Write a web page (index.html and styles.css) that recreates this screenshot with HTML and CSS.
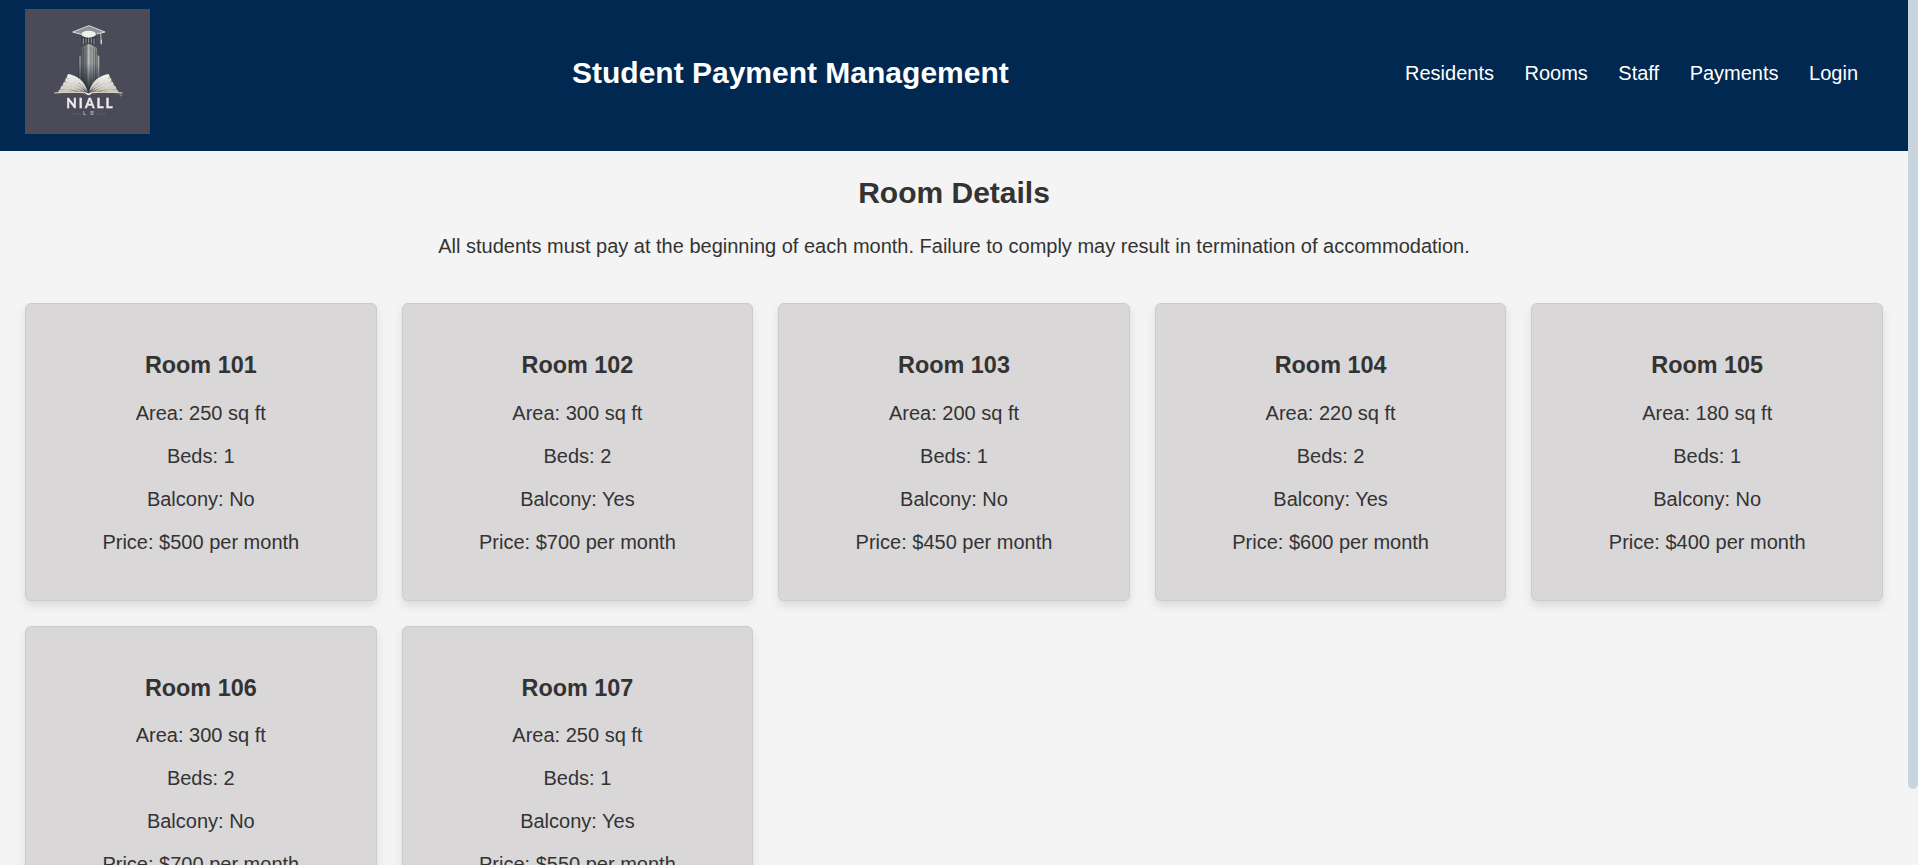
FILE: index.html
```html
<!DOCTYPE html>
<html lang="en">
<head>
<meta charset="utf-8">
<title>Student Payment Management</title>
<link rel="stylesheet" href="styles.css">
</head>
<body>
<div class="page">
  <header class="header">
    <svg class="logo" viewBox="75 27 375 375" role="img" aria-label="Niall logo">
      <defs>
        <linearGradient id="tower" x1="0" x2="1" y1="0" y2="0">
          <stop offset="0" stop-color="#3a4148"/><stop offset=".4" stop-color="#858a8d"/><stop offset=".6" stop-color="#b9bbb9"/><stop offset="1" stop-color="#63686b"/>
        </linearGradient>
        <linearGradient id="shade" x1="0" x2="0" y1="0" y2="1">
          <stop offset=".4" stop-color="#1c242b" stop-opacity="0"/><stop offset="1" stop-color="#1c242b"/>
        </linearGradient>
        <linearGradient id="page" x1="0" x2="0" y1="0" y2="1">
          <stop offset="0" stop-color="#f4f3ee"/><stop offset="1" stop-color="#c4c2ba"/>
        </linearGradient>
        <filter id="soft"><feGaussianBlur stdDeviation=".9"/></filter>
      </defs>
      <rect class="logo-bg" x="75" y="27" width="375" height="375"/>
      <g filter="url(#soft)">
        <path d="M235 168l7-4V144l24-13 25 13v20l8 4v80l-32 29-32-29z" fill="url(#tower)"/>
        <path d="M244 147v106M251 143v117M258 139v129M273 138v130M280 142v119M287 146v107" stroke="#454c52" stroke-width="2"/>
        <path d="M240 167v80M265 134v135M296 169v74" stroke="#c9cac6" stroke-width="2.5"/>
        <path d="M235 168l7-4V144l24-13 25 13v20l8 4v80l-32 29-32-29z" fill="url(#shade)"/>
        <path d="M245 111h42v23l-21-5-21 8z" fill="#353d45"/>
        <path d="M250 115v18M258 115v15M266 115v14M274 115v15M282 115v18" stroke="#aeb1b0" stroke-width="2.5"/>
        <path d="M218 96l49-19 48 19-25 7-46 1z" fill="#8f9294"/>
        <path d="M218 96l49-19 48 19M218 96l26 7M315 96l-25 6" fill="none" stroke="#dcdcd8" stroke-width="3"/>
        <path d="M244 103q2-11 22-11t22 11q-2 9-22 10-20-1-22-10z" fill="#f0f0ec"/>
        <path d="M302 97l2 34" stroke="#c3c2bd" stroke-width="3"/>
        <path d="M304 119v14" stroke="#d1cfc8" stroke-width="4"/>
        <path d="M204 222q42 8 60 52l-3 4H174l17-32 3-9z" fill="#5d5f63"/>
        <path d="M326 222q-42 8-60 52l3 4h88l-17-32-3-9z" fill="#5d5f63"/>
        <path d="M204 222q44 7 58 50-22-28-62-39zM198 234q39 6 62 40-28-23-65-29zM192 246q37 1 64 30-29-18-69-19zM184 258q35-4 67 19-31-10-71-9zM178 269q30-5 57 9h-62z" fill="url(#page)"/>
        <path d="M326 222q-44 7-58 50 22-28 62-39zM332 234q-39 6-62 40 28-23 65-29zM338 246q-37 1-64 30 29-18 69-19zM346 258q-35-4-67 19 31-10 71-9zM352 269q-30-5-57 9h62z" fill="url(#page)"/>
        <path d="M163 279q53-5 91-1l11 5 11-5q42-4 92 1" fill="none" stroke="#d9d1bd" stroke-width="3.5"/>
        <path d="M208 274q18-5 35 2M288 275q16-6 33-1" fill="none" stroke="#bca987" stroke-width="3"/>
        <path d="M258 279q8 9 15 0" fill="none" stroke="#e7e6e0" stroke-width="4"/>
        <path d="M359 284l5 2-2 3" fill="none" stroke="#b7ad9d" stroke-width="2.5"/>
        <text class="logo-name" x="199" y="325" textLength="139">NIALL</text>
        <path d="M217 342h24M291 342h27" stroke="#65656f" stroke-width="2"/>
        <text class="logo-sub" x="249" y="346" textLength="33">L B</text>
      </g>
    </svg>
    <h1 class="title">Student Payment Management</h1>
    <nav class="nav">
      <a>Residents</a><a>Rooms</a><a>Staff</a><a>Payments</a><a>Login</a>
    </nav>
  </header>
  <main class="main">
    <h2 class="heading">Room Details</h2>
    <p class="notice">All students must pay at the beginning of each month. Failure to comply may result in termination of accommodation.</p>
    <section class="rooms">
      <article class="room"><h3>Room 101</h3><p>Area: 250 sq ft</p><p>Beds: 1</p><p>Balcony: No</p><p>Price: $500 per month</p></article>
      <article class="room"><h3>Room 102</h3><p>Area: 300 sq ft</p><p>Beds: 2</p><p>Balcony: Yes</p><p>Price: $700 per month</p></article>
      <article class="room"><h3>Room 103</h3><p>Area: 200 sq ft</p><p>Beds: 1</p><p>Balcony: No</p><p>Price: $450 per month</p></article>
      <article class="room"><h3>Room 104</h3><p>Area: 220 sq ft</p><p>Beds: 2</p><p>Balcony: Yes</p><p>Price: $600 per month</p></article>
      <article class="room"><h3>Room 105</h3><p>Area: 180 sq ft</p><p>Beds: 1</p><p>Balcony: No</p><p>Price: $400 per month</p></article>
      <article class="room"><h3>Room 106</h3><p>Area: 300 sq ft</p><p>Beds: 2</p><p>Balcony: No</p><p>Price: $700 per month</p></article>
      <article class="room"><h3>Room 107</h3><p>Area: 250 sq ft</p><p>Beds: 1</p><p>Balcony: Yes</p><p>Price: $550 per month</p></article>
    </section>
  </main>
</div>
<div class="scroll-track"><div class="scroll-thumb"></div></div>
</body>
</html>
```
FILE: styles.css
```css
* { box-sizing: border-box; }

html { height: 100%; overflow: hidden; }

body {
  margin: 0;
  height: 100%;
  display: flex;
  overflow: hidden;
  background: #f4f4f4;
  color: #333;
  font: 20px/23px Arial, "Liberation Sans", sans-serif;
}

.page { flex: 1; min-width: 0; height: 100%; overflow: hidden; }

.header {
  display: flex;
  align-items: flex-start;
  height: 151px;
  padding: 9px 50px 0 25px;
  background: #002850;
  color: #fff;
}

.logo { display: block; width: 125px; height: 125px; }
.logo-bg { fill: #4a4a59; }
.logo-name { font: 700 41px Lato, sans-serif; fill: #ececec; stroke: #ececec; stroke-width: 1; }
.logo-sub { font: 700 17px Lato, sans-serif; fill: #b5b5b8; }

.title {
  margin: 47px 0 0 422px;
  font-size: 30px;
  line-height: 34px;
  white-space: nowrap;
}

.nav { display: flex; gap: 30.5px; margin: 53px 0 0 auto; }

.main { text-align: center; }
.heading { margin: 0; padding-top: 25px; font-size: 30px; line-height: 34px; }
.notice { margin: 25px 0 20px; }

.rooms {
  display: grid;
  grid-template-columns: repeat(5, 1fr);
  gap: 25px;
  padding: 25px;
}

.room {
  height: 297.6px;
  padding: 25px;
  background: #d9d7d8;
  border: 1px solid #ccc;
  border-radius: 6px;
  box-shadow: 0 5px 10px rgba(0, 0, 0, .1);
}

.room h3 { margin: 23px 0 22.7px; font-size: 23.4px; line-height: 27px; }
.room p { margin: 20px 0; }

.scroll-track { width: 10px; background: #f4f4f4; }
.scroll-thumb { height: 789px; background: #c8d5df; border-radius: 0 0 5px 5px; }
```
